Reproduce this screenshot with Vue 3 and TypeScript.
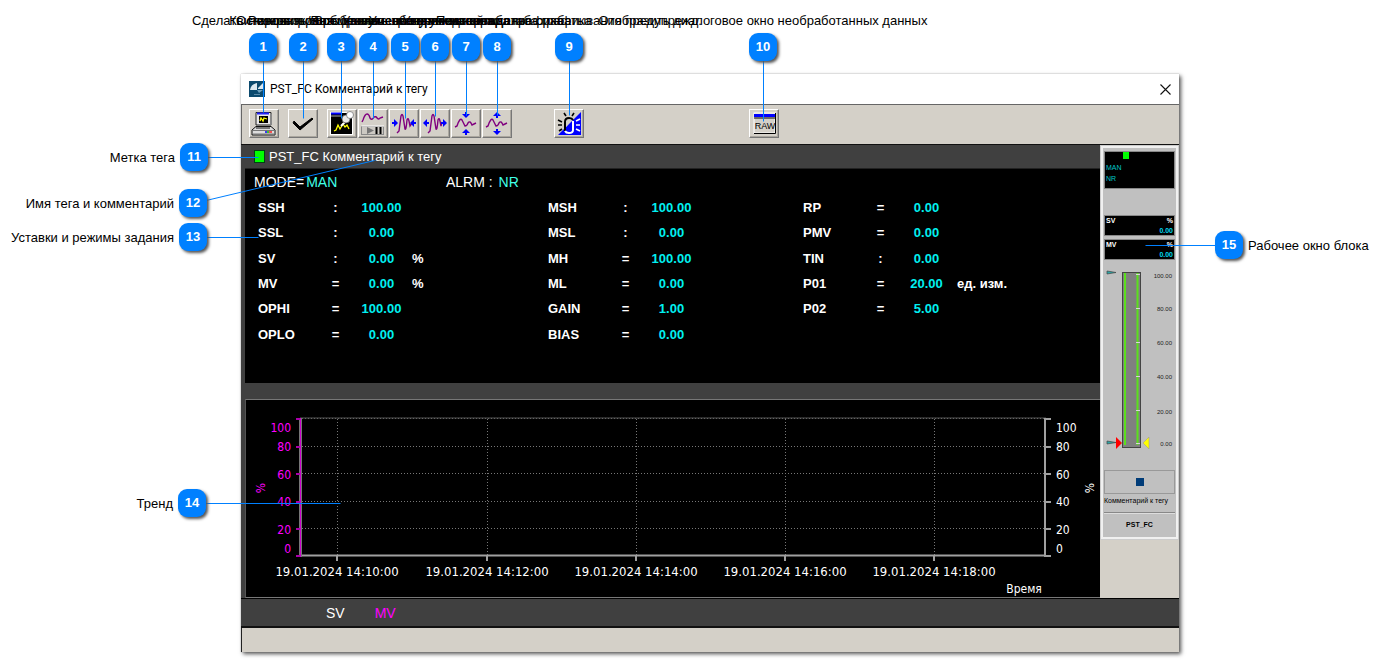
<script setup lang="ts">
interface Param {
  name: string
  sign: string
  value: string
  unit?: string
}

interface Callout {
  n: number
  x: number
  y: number
  tx: number
  ty: number
  text: string
  side: 'top' | 'left' | 'right'
}

const groups: Param[][] = [
  [
    { name: 'SSH', sign: ':', value: '100.00' },
    { name: 'SSL', sign: ':', value: '0.00' },
    { name: 'SV', sign: ':', value: '0.00', unit: '%' },
    { name: 'MV', sign: '=', value: '0.00', unit: '%' },
    { name: 'OPHI', sign: '=', value: '100.00' },
    { name: 'OPLO', sign: '=', value: '0.00' },
  ],
  [
    { name: 'MSH', sign: ':', value: '100.00' },
    { name: 'MSL', sign: ':', value: '0.00' },
    { name: 'MH', sign: '=', value: '100.00' },
    { name: 'ML', sign: '=', value: '0.00' },
    { name: 'GAIN', sign: '=', value: '1.00' },
    { name: 'BIAS', sign: '=', value: '0.00' },
  ],
  [
    { name: 'RP', sign: '=', value: '0.00' },
    { name: 'PMV', sign: '=', value: '0.00' },
    { name: 'TIN', sign: ':', value: '0.00' },
    { name: 'P01', sign: '=', value: '20.00', unit: 'ед. изм.' },
    { name: 'P02', sign: '=', value: '5.00' },
  ],
]

const callouts: Callout[] = [
  { n: 1, x: 263, y: 47, tx: 263, ty: 112, text: 'Сделать снимок экрана', side: 'top' },
  { n: 2, x: 303, y: 47, tx: 303, ty: 118, text: 'Квитировать сообщение', side: 'top' },
  { n: 3, x: 341, y: 47, tx: 341, ty: 118, text: 'Резервировать данные тренда', side: 'top' },
  { n: 4, x: 373, y: 47, tx: 373, ty: 118, text: 'Остановить/Возобновить обновление тренда', side: 'top' },
  { n: 5, x: 405, y: 47, tx: 405, ty: 118, text: 'Временную шкалу уменьшить', side: 'top' },
  { n: 6, x: 435, y: 47, tx: 435, ty: 116, text: 'Увеличение временной шкалы', side: 'top' },
  { n: 7, x: 466, y: 47, tx: 466, ty: 115, text: 'Уменьшение масштаба графика', side: 'top' },
  { n: 8, x: 497, y: 47, tx: 497, ty: 115, text: 'Увеличение масштаба графика', side: 'top' },
  { n: 9, x: 569, y: 47, tx: 569, ty: 115, text: 'Подтверждение срабатывания предупрежд.', side: 'top' },
  { n: 10, x: 763, y: 47, tx: 763, ty: 121, text: 'Отобразить диалоговое окно необработанных данных', side: 'top' },
  { n: 11, x: 194, y: 157, tx: 258, ty: 157, text: 'Метка тега', side: 'left' },
  { n: 12, x: 193, y: 203, tx: 374, ty: 160, text: 'Имя тега и комментарий', side: 'left' },
  { n: 13, x: 193, y: 237, tx: 258, ty: 237, text: 'Уставки и режимы задания', side: 'left' },
  { n: 14, x: 192, y: 503, tx: 340, ty: 503, text: 'Тренд', side: 'left' },
  { n: 15, x: 1229, y: 245, tx: 1145, ty: 245, text: 'Рабочее окно блока', side: 'right' },
]

const axis = [
  { v: '100', tick: 18, y: 32 },
  { v: '80', tick: 46, y: 51 },
  { v: '60', tick: 73, y: 79 },
  { v: '40', tick: 101, y: 106 },
  { v: '20', tick: 128, y: 134 },
  { v: '0', tick: 155, y: 153 },
]

const times = [
  { x: 91, t: '19.01.2024 14:10:00' },
  { x: 241, t: '19.01.2024 14:12:00' },
  { x: 390, t: '19.01.2024 14:14:00' },
  { x: 539, t: '19.01.2024 14:16:00' },
  { x: 688, t: '19.01.2024 14:18:00' },
]

const scale = [
  { v: '100.00', tick: 11, y: 15 },
  { v: '80.00', tick: 45, y: 48 },
  { v: '60.00', tick: 79, y: 82 },
  { v: '40.00', tick: 113, y: 116 },
  { v: '20.00', tick: 147, y: 151 },
  { v: '0.00', tick: 180, y: 183 },
]
</script>

<template>
  <main class="page">
    <section class="window">
      <header class="titlebar">
        <svg class="app-icon" width="16" height="16" viewBox="0 0 16 16">
          <rect width="16" height="16" fill="#0c4a6e" />
          <path d="M1 9 Q2 3 8 2 V9H1Z M9 8 V7 L14 2 V8Z" fill="#dce9f0" />
          <path d="M8 9 H14 L10 12Z" fill="#6fa0bc" />
          <path d="M5 13.5 H11" stroke="#5c8ba8" />
        </svg>
        <h1>PST_FC Комментарий к тегу</h1>
        <button class="close" type="button" aria-label="Закрыть">
          <svg width="11" height="11" viewBox="0 0 11 11"><path d="M.5 .5 L10.500 10.500 M10.500 .5 L.5 10.500" stroke="#111" stroke-width="1.100" /></svg>
        </button>
      </header>

      <div class="toolbar">
        <button class="tool gap-s" type="button" aria-label="Копия экрана">
          <svg viewBox="0 0 30 29">
            <path d="M7 3.500 H22 V16 H7Z" fill="#e8e8e8" stroke="#222" />
            <path d="M8 4.500 H20" stroke="#22f" stroke-width="2" />
            <rect x="10" y="7" width="9" height="7" fill="#000" />
            <path d="M11 12 L12 9 L14 12 L15 9 L18 10" fill="none" stroke="#ff0" stroke-width="1.300" />
            <path d="M22 5 V16" stroke="#888" stroke-width="2" />
            <path d="M7 17.500 H22 L26 21 V26 H3 V21Z" fill="#ddd" stroke="#111" />
            <path d="M4 21.500 H26 M4 25 H26" stroke="#777" />
            <path d="M16 23 h2" stroke="#00f" stroke-width="1.500" /><path d="M18 23 h2" stroke="#0b0" stroke-width="1.500" /><path d="M20 23 h3" stroke="#f22" stroke-width="1.500" />
            <path d="M7 19 H21" stroke="#111" />
          </svg>
        </button>
        <button class="tool gap-s" type="button" aria-label="Квитировать">
          <svg viewBox="0 0 30 29"><path d="M6 12 L12 18 L24 9 L25 10 L12 21 L5 14Z" fill="#000" stroke="#000" /></svg>
        </button>
        <button class="tool" type="button" aria-label="Резервировать">
          <svg viewBox="0 0 30 29">
            <rect x="3" y="3" width="23" height="23" fill="#fff" />
            <rect x="4" y="4" width="21" height="21" fill="#000" />
            <path d="M4 4.500 H15" stroke="#00f" stroke-width="2" />
            <path d="M4 7 H15" stroke="#aaa" />
            <path d="M7 22 L9 21 L11 16 L13 20 L16 15 L18 18 L20 16 L22 20" fill="none" stroke="#ff0" stroke-width="1.300" />
            <path d="M14 17 L18 13" stroke="#fff" stroke-width="2" />
            <circle cx="19" cy="10" r="4" fill="#e8e8e8" stroke="#555" stroke-width=".7" />
            <circle cx="23" cy="6" r="3.500" fill="#fff" stroke="#666" stroke-width=".7" />
          </svg>
        </button>
        <button class="tool" type="button" aria-label="Остановить или возобновить">
          <svg viewBox="0 0 30 29">
            <path class="wave" d="M4 13 L5 11 Q7 5 9 5 Q11 5 12 9 Q14 12 16 8 Q18 7 19 9 Q21 11 22 9 L25 8" />
            <rect x="3.500" y="17.500" width="22" height="8" fill="#ccc9c3" stroke="#888" />
            <path d="M3.500 17 H26" stroke="#fff" />
            <path d="M9 18 L16 21.500 L9 25Z" fill="#777" />
            <path d="M18.500 18 V25 M22.500 18 V25" stroke="#000" stroke-width="2" />
          </svg>
        </button>
        <button class="tool" type="button" aria-label="Сжать по времени">
          <svg viewBox="0 0 30 29">
            <path class="wave" d="M8 24 L10 22 L12 7 Q13 4 14 7 L16 20 Q17 22 18 11 Q19 8 20 12 L21 17 L23 14" />
            <path d="M3 13 h2 v-3 l4 4 l-4 4 v-3 h-2Z M27 13 h-2 v-3 l-4 4 l4 4 v-3 h2Z" fill="#00f" />
          </svg>
        </button>
        <button class="tool" type="button" aria-label="Растянуть по времени">
          <svg viewBox="0 0 30 29">
            <path class="wave" d="M8 24 L10 22 L12 7 Q13 4 14 7 L16 20 Q17 22 18 11 Q19 8 20 12 L21 17 L22 13" />
            <path d="M9 13 h-2 v-3 l-4 4 l4 4 v-3 h2Z M21 13 h2 v-3 l4 4 l-4 4 v-3 h-2Z" fill="#00f" />
          </svg>
        </button>
        <button class="tool" type="button" aria-label="Сжать по вертикали">
          <svg viewBox="0 0 30 29">
            <path class="wave" d="M4 18 L6 17 Q9 8 11 11 L14 17 Q16 17 17 14 Q19 11 21 16 L25 14" />
            <path d="M14 3 h2 v2 h3 l-4 4 l-4 -4 h3Z M14 26 h2 v-2 h3 l-4 -4 l-4 4 h3Z" fill="#00f" />
          </svg>
        </button>
        <button class="tool gap-m" type="button" aria-label="Растянуть по вертикали">
          <svg viewBox="0 0 30 29">
            <path class="wave" d="M4 18 L6 17 Q9 8 11 11 L14 17 Q16 17 17 14 Q19 11 21 16 L25 14" />
            <path d="M14 9 h2 v-2 h3 l-4 -4 l-4 4 h3Z M14 20 h2 v2 h3 l-4 4 l-4 -4 h3Z" fill="#00f" />
          </svg>
        </button>
        <button class="tool gap-l" type="button" aria-label="Сигнализация">
          <svg viewBox="0 0 30 29">
            <path d="M27 3 V26 H4Z" fill="#00f" />
            <path d="M10 4 L12 7 M20 4 L18 7 M4 11 L8 13 M4 16 H8 M5 22 L8 20" stroke="#000" stroke-width="1.600" />
            <path d="M22 12 L26 10 M22 16 H26 M22 20 L26 22" stroke="#fff" stroke-width="1.600" />
            <path d="M11 22 V13 Q11 9 15 9 Q18 9 19 11" fill="none" stroke="#000" stroke-width="2" />
            <path d="M19 12 V21 Q19 24 15 24 Q12 24 11 22" fill="none" stroke="#fff" stroke-width="2" />
            <path d="M12 20 L18 13 V21 H12Z" fill="#00f" />
            <path d="M12 12 h5 l-5 6Z" fill="#d4d0c8" />
          </svg>
        </button>
        <button class="tool" type="button" aria-label="Необработанные данные">
          <svg viewBox="0 0 30 29">
            <rect x="5" y="4" width="21" height="20" fill="#d4d0c8" stroke="#fff" />
            <path d="M5 24.500 H26.500 V4" fill="none" stroke="#000" />
            <rect x="5" y="5" width="21" height="3" fill="#00f" />
            <path d="M5 9 H26" stroke="#000" />
            <text x="16" y="20" text-anchor="middle" class="raw">RAW</text>
          </svg>
        </button>
      </div>

      <div class="body">
        <div class="main">
          <div class="tagline"><span class="tagmark"></span>PST_FC Комментарий к тегу</div>
          <div class="params">
            <div class="modes">
              <p>MODE=<b>MAN</b></p>
              <p>ALRM : <b>NR</b></p>
            </div>
            <div class="groups">
              <table v-for="(g, i) in groups" :key="i">
                <tbody>
                  <tr v-for="p in g" :key="p.name">
                    <th scope="row">{{ p.name }}</th>
                    <td class="sign">{{ p.sign }}</td>
                    <td class="value">{{ p.value }}</td>
                    <td class="unit">{{ p.unit }}</td>
                  </tr>
                </tbody>
              </table>
            </div>
          </div>
          <div class="trend">
            <svg viewBox="0 0 854 197" role="img" aria-label="Тренд">
              <g class="grid">
                <path v-for="a in axis" :key="a.v" :d="`M56 ${a.tick + 0.5} H799`" />
                <path v-for="t in times" :key="t.x" :d="`M${t.x + 0.5} 19 V155`" />
              </g>
              <path d="M54 18 H800" stroke="#555" />
              <path d="M54 155.500 H800" stroke="#a0a0a0" stroke-width="2" />
              <path d="M799 18 V157" stroke="#a0a0a0" stroke-width="2" />
              <path d="M54.500 18 V157" stroke="#777" stroke-width="3" />
              <path d="M54.500 18 V157" stroke="#c0c" stroke-width="1" />
              <template v-for="a in axis" :key="a.v">
                <path :d="`M50 ${a.tick + 1} H54`" stroke="#a0a" stroke-width="2" />
                <path :d="`M800 ${a.tick + 1} H805`" stroke="#a0a0a0" stroke-width="2" />
                <text class="mv" x="45" :y="a.y" text-anchor="end">{{ a.v }}</text>
                <text x="810" :y="a.y">{{ a.v }}</text>
              </template>
              <template v-for="t in times" :key="t.x">
                <path :d="`M${t.x} 155 V161`" stroke="#a0a0a0" stroke-width="2" />
                <text class="date" :x="t.x" y="176" text-anchor="middle">{{ t.t }}</text>
              </template>
              <text class="mv" transform="translate(19 88) rotate(-90)" text-anchor="middle">%</text>
              <text transform="translate(848 88) rotate(-90)" text-anchor="middle">%</text>
              <text x="778" y="193" text-anchor="middle">Время</text>
            </svg>
          </div>
        </div>

        <aside class="side">
          <div class="faceplate">
            <div class="status"><i></i><span>MAN</span><span>NR</span></div>
            <div class="reading"><b>SV</b><b>%</b><em>0.00</em></div>
            <div class="reading"><b>MV</b><b>%</b><em>0.00</em></div>
            <svg class="gauge" viewBox="0 0 71 207">
              <rect x="18.500" y="9.500" width="18" height="175" fill="#808080" stroke="#444" />
              <path d="M21 10 V182 M33.500 10 V182" stroke="#5be01c" stroke-width="2" />
              <template v-for="s in scale" :key="s.v">
                <path :d="`M32 ${s.tick + 0.5} H36`" stroke="#d8d8d8" />
                <text x="68" :y="s.y" text-anchor="end">{{ s.v }}</text>
              </template>
              <path d="M3 8 L12 9.500 L3 11Z M3 178 L12 179.500 L3 181Z" fill="#2aa8a8" stroke="#444" stroke-width=".7" />
              <path d="M12 174 L18 180 L12 186Z" fill="#f00" />
              <path d="M45 174 L39 180 L45 186Z" fill="#ff0" stroke="#998" stroke-width=".5" />
            </svg>
            <button class="op" type="button" aria-label="Операция"><i></i></button>
            <p class="comment">Комментарий к тегу</p>
            <p class="tag">PST_FC</p>
          </div>
        </aside>
      </div>

      <div class="legend"><span>SV</span><span class="mv">MV</span></div>
      <footer class="statusbar"></footer>
    </section>

    <div class="callouts">
      <svg class="leaders" width="1383" height="661">
        <line v-for="c in callouts" :key="c.n" :x1="c.x + 0.5" :y1="c.y + 0.5" :x2="c.tx + 0.5" :y2="c.ty + 0.5" />
      </svg>
      <div v-for="c in callouts" :key="c.n" class="callout" :class="c.side" :style="{ left: c.x + 'px', top: c.y + 'px' }">
        <span class="badge">{{ c.n }}</span>
        <span class="label">{{ c.text }}</span>
      </div>
    </div>
  </main>
</template>

<style>
body {
  margin: 0;
  background: #fff;
}
</style>

<style scoped>
* {
  box-sizing: border-box;
}
h1,
p {
  margin: 0;
  font-weight: normal;
}
button {
  padding: 0;
  font: inherit;
}
.page {
  position: relative;
  padding: 74px 204px 8px 241px;
  font: 13px/16px "Liberation Sans", Arial, sans-serif;
  color: #000;
}
.window {
  background: #d4d0c8;
  box-shadow: 2px 2px 4px #555, 0 0 1px #aaa;
}
.titlebar {
  display: flex;
  align-items: center;
  gap: 5px;
  height: 30px;
  padding: 0 8px;
  background: #fff;
}
.titlebar h1 {
  flex: 1;
  font: 12px/16px Roboto, "Noto Sans", sans-serif;
}
.close {
  display: flex;
  border: 0;
  background: none;
}
.toolbar {
  display: flex;
  gap: 1px;
  height: 40px;
  padding: 4px 7px;
  border-top: 1px solid #666;
  border-left: 1px solid #666;
}
.tool {
  width: 30px;
  height: 29px;
  border: 1px solid;
  border-color: #fff #777 #777 #fff;
  background: #d4d0c8;
  box-shadow: inset -1px -1px #aaa69e;
}
.tool svg {
  display: block;
  width: 30px;
  height: 29px;
  margin: -1px;
}
.gap-s {
  margin-right: 8px;
}
.gap-m {
  margin-right: 41px;
}
.gap-l {
  margin-right: 164px;
}
.wave {
  fill: none;
  stroke: #80007f;
  stroke-width: 1.4;
}
.raw {
  font: 9px "Liberation Sans", Arial, sans-serif;
}
.body {
  display: flex;
  border-top: 1px solid #111;
  background: #404040;
}
.main {
  flex: 1;
  padding-left: 4px;
}
.tagline {
  display: flex;
  align-items: center;
  gap: 4px;
  height: 24px;
  padding-left: 9px;
  border-bottom: 1px solid #222;
  color: #fff;
}
.tagmark {
  width: 11px;
  height: 13px;
  border: 1px solid #041;
  background: #0f0;
}
.params {
  height: 214px;
  padding: 5px 0 0 9px;
  background: #000;
  color: #fff;
}
.modes {
  display: flex;
  font-size: 14px;
}
.modes p {
  width: 192px;
}
.modes b {
  margin-left: 2px;
  color: #40ffe8;
  font-weight: normal;
}
.groups {
  display: flex;
  align-items: flex-start;
  padding: 5px 0 0 4px;
}
table {
  width: 255px;
  border-collapse: collapse;
  table-layout: fixed;
  font-weight: bold;
}
table:first-child {
  width: 290px;
}
tr {
  height: 25px;
}
tr:nth-child(3n + 2) {
  height: 26px;
}
th,
td {
  padding: 0;
  text-align: left;
}
th {
  width: 62px;
}
.sign {
  width: 31px;
  text-align: center;
}
.value {
  width: 61px;
  color: #00f0f0;
  text-align: center;
}
.trend {
  margin-top: 16px;
  border: 1px solid #777;
  border-right: 0;
  border-left-color: #555;
  background: #000;
}
.trend svg {
  display: block;
  width: 100%;
}
.trend text {
  fill: #fff;
  font: 12px "DejaVu Sans Condensed", "Noto Sans", sans-serif;
}
.trend .date {
  font-size: 13px;
}
.trend .mv {
  fill: #f0f;
}
.grid path {
  stroke: #777;
  stroke-dasharray: 1 2;
}
.side {
  width: 79px;
  background: #d4d0c8;
}
.faceplate {
  padding: 3px;
  border: 1px solid #ccc;
  outline: 2px solid #f0f0f0;
  outline-offset: -3px;
  background: #c0c0c0;
  font: 7px/11px "Liberation Sans", Arial, sans-serif;
}
.status {
  display: flex;
  flex-direction: column;
  height: 38px;
  margin: 2px 0 26px;
  padding-left: 1px;
  border: 1px solid #888;
  background: #000;
  color: #00c8c8;
}
.status i {
  width: 6px;
  height: 7px;
  margin: 0 0 3px 17px;
  background: #0f0;
}
.reading {
  display: flex;
  flex-wrap: wrap;
  justify-content: space-between;
  height: 21px;
  margin-bottom: 3px;
  padding: 0 1px;
  border: 1px solid #888;
  background: #000;
  color: #fff;
  line-height: 10px;
}
.reading em {
  width: 100%;
  color: #00d8f0;
  font-style: normal;
  font-weight: bold;
  text-align: right;
}
.gauge {
  display: block;
  width: 71px;
  height: 207px;
}
.gauge text {
  fill: #222;
  font: 6px "Liberation Sans", Arial, sans-serif;
}
.op {
  display: flex;
  align-items: center;
  justify-content: center;
  width: 100%;
  height: 24px;
  border: 1px solid #999;
  background: #c0c0c0;
}
.op i {
  width: 8px;
  height: 8px;
  background: #003c78;
}
.comment {
  height: 19px;
  padding-top: 1px;
  border-bottom: 1px solid #888;
  white-space: nowrap;
}
.tag {
  height: 23px;
  border-top: 1px solid #ddd;
  font-weight: bold;
  line-height: 21px;
  text-align: center;
}
.legend {
  display: flex;
  gap: 30px;
  height: 30px;
  padding-left: 85px;
  border-top: 1px solid #000;
  border-bottom: 2px solid #111;
  background: #404040;
  color: #fff;
  font-size: 14px;
  line-height: 28px;
}
.legend .mv {
  color: #f0f;
}
.statusbar {
  height: 24px;
  border-left: 1px solid #222;
}
.callouts {
  position: absolute;
  inset: 0;
  pointer-events: none;
}
.leaders {
  position: absolute;
  left: 0;
  top: 0;
}
.leaders line {
  stroke: #0080ff;
}
.callout {
  position: absolute;
  width: 0;
  height: 0;
}
.badge {
  position: absolute;
  left: -14px;
  top: -14px;
  width: 28px;
  height: 28px;
  border-radius: 9px;
  background: #0080ff;
  box-shadow: 2px 2px 3px #555;
  color: #fff;
  font-weight: bold;
  line-height: 28px;
  text-align: center;
}
.label {
  position: absolute;
  top: -7px;
  white-space: nowrap;
}
.top .label {
  top: -34px;
  left: 0;
  transform: translateX(-50%);
}
.left .label {
  right: 19px;
}
.right .label {
  left: 19px;
}
</style>
